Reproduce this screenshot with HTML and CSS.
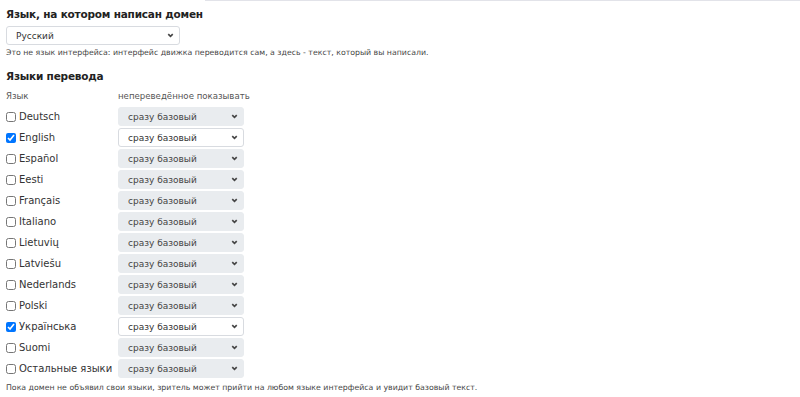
FILE: index.html
```html
<!DOCTYPE html>
<html lang="ru">
<head>
    <meta charset="UTF-8">
    <title>Языки домена</title>
    <link rel="stylesheet" href="styles.css">
</head>
<body>
    <div class="topline"></div>

    <h2 class="title">Язык, на котором написан домен</h2>
    <div class="sel-wrap main-sel">
        <select class="sel"><option>Русский</option></select>
        <svg class="chev" viewBox="0 0 10 10"><path d="M2.5 3.5 L5 6 L7.5 3.5" /></svg>
    </div>
    <p class="hint">Это не язык интерфейса: интерфейс движка переводится сам, а здесь - текст, который вы написали.</p>

    <h2 class="title second">Языки перевода</h2>

    <div class="langs">
        <div class="head">Язык</div>
        <div class="head">непереведённое показывать</div>
    </div>
    <div class="langs rows" id="rows"></div>

    <p class="hint foot">Пока домен не объявил свои языки, зритель может прийти на любом языке интерфейса и увидит базовый текст.</p>

    <script>
        const langs = [
            ['Deutsch', false], ['English', true], ['Español', false], ['Eesti', false],
            ['Français', false], ['Italiano', false], ['Lietuvių', false], ['Latviešu', false],
            ['Nederlands', false], ['Polski', false], ['Українська', true], ['Suomi', false],
            ['Остальные языки', false]
        ];
        const rows = document.getElementById('rows');
        langs.forEach(([name, on]) => {
            const label = document.createElement('label');
            label.className = 'lang';
            label.innerHTML = '<input type="checkbox"' + (on ? ' checked' : '') + '> ' + name;
            const wrap = document.createElement('div');
            wrap.className = 'sel-wrap' + (on ? '' : ' off');
            wrap.innerHTML = '<select class="sel"' + (on ? '' : ' disabled') + '><option>сразу базовый</option></select>' +
                '<svg class="chev" viewBox="0 0 10 10"><path d="M2.5 3.5 L5 6 L7.5 3.5" /></svg>';
            rows.appendChild(label);
            rows.appendChild(wrap);
        });
    </script>
</body>
</html>
```

FILE: styles.css
```css
* {
    box-sizing: border-box;
}

body {
    margin: 0;
    padding: 0 6px;
    font-family: 'DejaVu Sans', Verdana, sans-serif;
    color: #222;
    background: #fff;
}

.topline {
    margin-left: 199px;
    margin-right: -6px;
    border-top: 1px solid #e2e3e9;
}

.title {
    margin: 6px 0 4px;
    font-size: 10.5px;
    line-height: 15px;
    letter-spacing: -0.2px;
    font-weight: bold;
    color: #222;
}

.title.second {
    margin-top: 10px;
    margin-bottom: 6px;
}

.hint {
    margin: 2px 0 0;
    font-size: 7.8px;
    line-height: 12px;
    color: #444;
    white-space: nowrap;
}

.hint.foot {
    margin-top: 3px;
}

.sel-wrap {
    position: relative;
    width: 126px;
    height: 19px;
    margin: 1px 0;
}

.main-sel {
    width: 174px;
    margin: 0;
}

.sel {
    appearance: none;
    -webkit-appearance: none;
    display: block;
    width: 100%;
    height: 100%;
    padding: 0 16px 0 9px;
    border: 1px solid #d8dbe0;
    border-radius: 3px;
    background: #fff;
    font-family: 'DejaVu Sans', Verdana, sans-serif;
    font-size: 9px;
    color: #333;
    outline: none;
}

.off .sel {
    background: #e9ecef;
    border-color: #e9ecef;
    opacity: 1;
    color: #444;
}

.chev {
    position: absolute;
    right: 5px;
    top: 5px;
    width: 9px;
    height: 9px;
    fill: none;
    stroke: #444;
    stroke-width: 1.8;
    pointer-events: none;
}

.langs {
    display: grid;
    grid-template-columns: 112px 126px;
    align-items: center;
}

.rows {
    margin-top: 4px;
}

.head {
    font-size: 8.6px;
    line-height: 12px;
    color: #555;
    white-space: nowrap;
}

.lang {
    display: flex;
    align-items: center;
    gap: 3px;
    font-size: 10px;
    color: #333;
    height: 21px;
    white-space: nowrap;
}

.lang input {
    width: 10px;
    height: 10px;
    margin: 0;
}
```
